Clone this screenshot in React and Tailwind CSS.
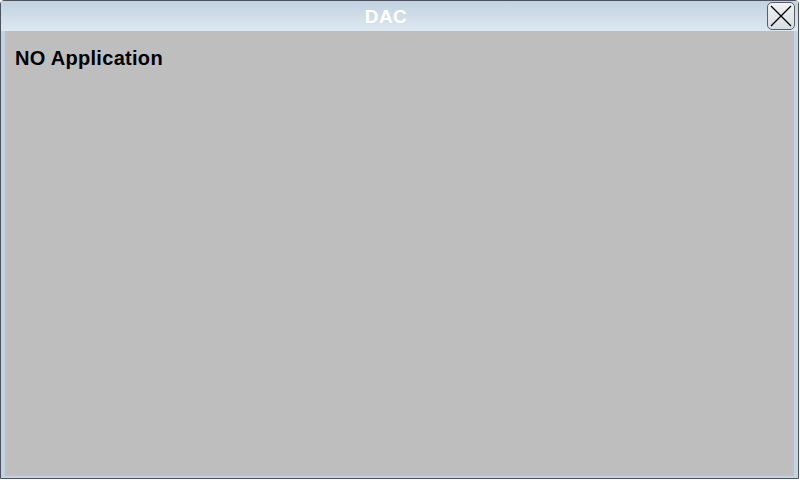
export default function App() {
  return (
    <div
      className="w-[800px] h-[480px] bg-white"
      style={{ fontFamily: '"Liberation Sans", Arial, sans-serif' }}
    >
      <div className="w-[799px] h-[479px] rounded-tl-[4px] rounded-tr-[4px] border-l border-t border-b border-r border-[#4c5260] bg-[#c3d3e3] flex flex-col">
        <div className="relative h-[30px] shrink-0 bg-gradient-to-b from-[#c2d2e0] to-[#dde8f1] flex items-center">
          <div className="w-[770px] text-center text-white font-bold text-[19px] tracking-[0.5px] leading-none">DAC</div>
          <button className="absolute right-[3px] top-[1px] w-[28px] h-[28px] rounded-[5px] border border-[#5a5f66] bg-gradient-to-b from-[#f0f2f4] to-[#d8dde2] flex items-center justify-center p-0">
            <svg width="24" height="24" viewBox="0 0 24 24">
              <path d="M2 2 L22 22 M22 2 L2 22" stroke="#000" strokeWidth="1.3" fill="none" />
            </svg>
          </button>
        </div>
        <div className="flex-1 mx-[4px] mb-[2px] bg-[#bebebe] px-[10px] pt-[17px]">
          <div className="text-black font-bold text-[20px] tracking-[0.3px] leading-none">NO Application</div>
        </div>
      </div>
    </div>
  );
}
